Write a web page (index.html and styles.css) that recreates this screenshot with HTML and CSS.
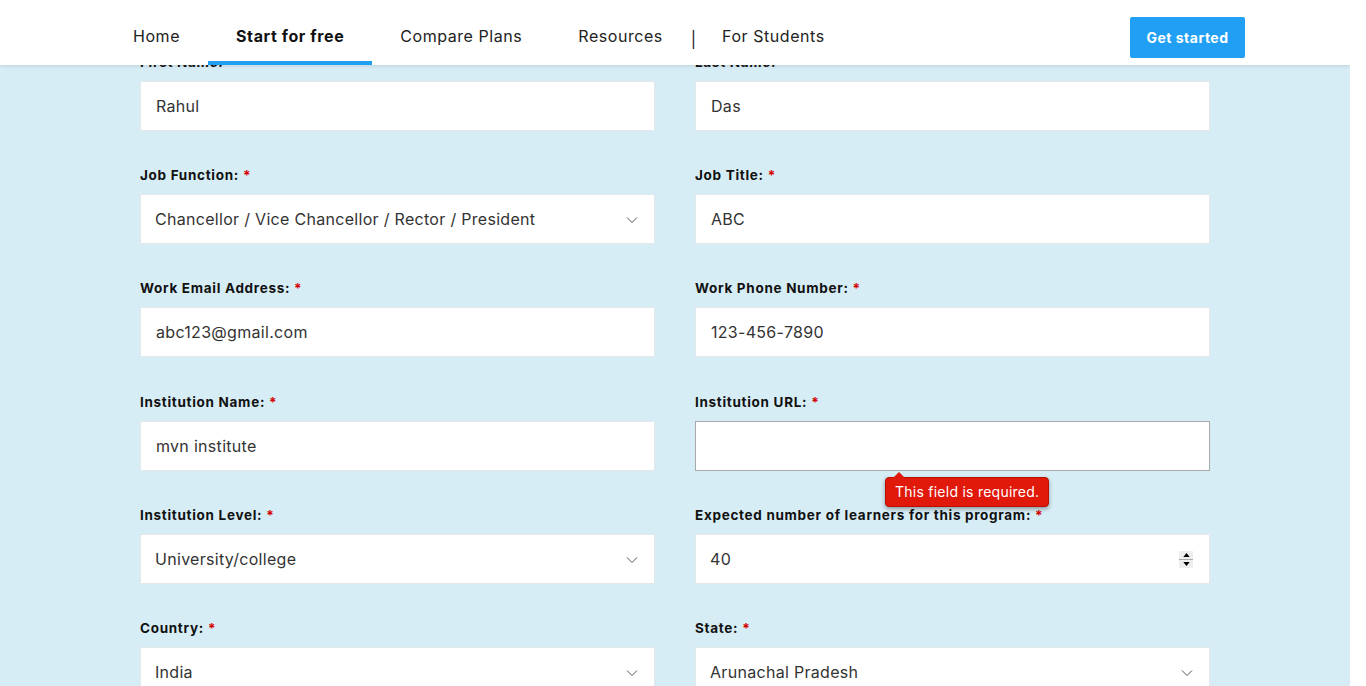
FILE: index.html
```html
<!DOCTYPE html>
<html lang="en">
<head>
<meta charset="utf-8">
<title>Start for free</title>
<link rel="stylesheet" href="styles.css">
</head>
<body>
<div class="page">
  <header class="topbar">
    <nav class="nav">
      <a class="nav-item">Home</a>
      <a class="nav-item active">Start for free</a>
      <a class="nav-item">Compare Plans</a>
      <a class="nav-item">Resources</a>
      <span class="nav-sep">|</span>
      <a class="nav-item">For Students</a>
    </nav>
    <a class="btn-start">Get started</a>
  </header>

  <form class="form">
    <div class="field">
      <label class="lbl">First Name:</label>
      <div class="input">Rahul</div>
    </div>
    <div class="field">
      <label class="lbl">Last Name:</label>
      <div class="input">Das</div>
    </div>

    <div class="field">
      <label class="lbl">Job Function: <span class="req">*</span></label>
      <div class="input select">Chancellor / Vice Chancellor / Rector / President
        <svg class="chev" viewBox="0 0 12 8" width="12" height="8"><path d="M1 1.5 L6 6.5 L11 1.5" fill="none" stroke="#555" stroke-width="1"/></svg>
      </div>
    </div>
    <div class="field">
      <label class="lbl">Job Title: <span class="req">*</span></label>
      <div class="input">ABC</div>
    </div>

    <div class="field">
      <label class="lbl">Work Email Address: <span class="req">*</span></label>
      <div class="input">abc123@gmail.com</div>
    </div>
    <div class="field">
      <label class="lbl">Work Phone Number: <span class="req">*</span></label>
      <div class="input">123-456-7890</div>
    </div>

    <div class="field">
      <label class="lbl">Institution Name: <span class="req">*</span></label>
      <div class="input">mvn institute</div>
    </div>
    <div class="field">
      <label class="lbl">Institution URL: <span class="req">*</span></label>
      <div class="input invalid"></div>
      <div class="tip">This field is required.</div>
    </div>

    <div class="field">
      <label class="lbl">Institution Level: <span class="req">*</span></label>
      <div class="input select">University/college
        <svg class="chev" viewBox="0 0 12 8" width="12" height="8"><path d="M1 1.5 L6 6.5 L11 1.5" fill="none" stroke="#555" stroke-width="1"/></svg>
      </div>
    </div>
    <div class="field">
      <label class="lbl">Expected number of learners for this program: <span class="req">*</span></label>
      <div class="input select">40
        <span class="spin"><span class="spin-btn"><svg viewBox="0 0 8 5" width="7" height="4"><path d="M0 5 L4 0 L8 5Z" fill="#000"/></svg></span><span class="spin-btn"><svg viewBox="0 0 8 5" width="7" height="4"><path d="M0 0 L4 5 L8 0Z" fill="#000"/></svg></span></span>
      </div>
    </div>

    <div class="field">
      <label class="lbl">Country: <span class="req">*</span></label>
      <div class="input select">India
        <svg class="chev" viewBox="0 0 12 8" width="12" height="8"><path d="M1 1.5 L6 6.5 L11 1.5" fill="none" stroke="#555" stroke-width="1"/></svg>
      </div>
    </div>
    <div class="field">
      <label class="lbl">State: <span class="req">*</span></label>
      <div class="input select">Arunachal Pradesh
        <svg class="chev" viewBox="0 0 12 8" width="12" height="8"><path d="M1 1.5 L6 6.5 L11 1.5" fill="none" stroke="#555" stroke-width="1"/></svg>
      </div>
    </div>
  </form>
</div>
<div class="scroll-strip"></div>
</body>
</html>
```

FILE: styles.css
```css
html, body {
  margin: 0;
  padding: 0;
  height: 686px;
  overflow: hidden;
  background: #fff;
  font-family: "Inter", "Open Sans", sans-serif;
}

.page {
  width: 1350px;
  height: 686px;
  background: #d7edf5;
  position: relative;
  overflow: hidden;
}

.topbar {
  position: absolute;
  top: 0;
  left: 0;
  right: 0;
  height: 65px;
  background: #fff;
  box-shadow: 0 1px 4px rgba(0, 0, 0, 0.12);
  display: flex;
  align-items: flex-start;
  justify-content: space-between;
  padding: 0 105px;
  z-index: 5;
}

.nav {
  display: flex;
  align-items: stretch;
  height: 65px;
}

.nav-item {
  display: flex;
  align-items: center;
  box-sizing: border-box;
  height: 65px;
  padding: 10px 28px 0;
  border-bottom: 4px solid transparent;
  font-size: 16px;
  letter-spacing: 0.55px;
  color: #222;
}

.nav-item.active {
  font-weight: 700;
  letter-spacing: 0.6px;
  color: #111;
  border-bottom-color: #209ef0;
}

.nav-sep {
  display: flex;
  align-items: center;
  box-sizing: border-box;
  height: 65px;
  padding-top: 12px;
  font-size: 16px;
  color: #222;
  margin-right: -2px;
}

.btn-start {
  display: flex;
  align-items: center;
  justify-content: center;
  width: 115px;
  height: 41px;
  margin-top: 17px;
  background: #209ff5;
  color: #fff;
  font-weight: 700;
  font-size: 14px;
  letter-spacing: 0.5px;
  border-radius: 2px;
}

.form {
  display: grid;
  grid-template-columns: 515px 515px;
  column-gap: 40px;
  row-gap: 34.2px;
  width: 1070px;
  margin: 0 auto;
  padding-top: 52px;
}

.field {
  position: relative;
  display: flex;
  flex-direction: column;
}

.lbl {
  font-size: 13.5px;
  font-weight: 700;
  line-height: 20px;
  letter-spacing: 0.7px;
  color: #111;
  margin-bottom: 9px;
}

.req {
  color: #d40000;
}

.input {
  box-sizing: border-box;
  height: 50px;
  background: #fff;
  border: 1px solid #e4e8ea;
  display: flex;
  align-items: center;
  padding: 0 15px;
  font-size: 16px;
  letter-spacing: 0.3px;
  color: #333;
  position: relative;
}

.input.select {
  padding-left: 14px;
}

.input.invalid {
  border: 1px solid #a9a9a9;
}

.chev {
  position: absolute;
  right: 16px;
  top: 21px;
}

.spin {
  position: absolute;
  right: 16px;
  top: 16px;
  display: flex;
  flex-direction: column;
  width: 14px;
  height: 17px;
  background: #aaa;
  gap: 1px;
}

.spin-btn {
  flex: 1;
  background: #eee;
  display: flex;
  align-items: center;
  justify-content: center;
}

.tip {
  position: absolute;
  left: 190px;
  top: 85px;
  background: #e0190b;
  color: #fff;
  font-size: 14px;
  letter-spacing: 0.25px;
  padding: 0 9px;
  height: 30px;
  display: flex;
  align-items: center;
  border-radius: 4px;
  box-shadow: 0 2px 4px rgba(0, 0, 0, 0.35);
  border: 1px solid #b80f05;
  box-sizing: border-box;
  white-space: nowrap;
  z-index: 3;
}

.tip::before {
  content: "";
  position: absolute;
  left: 7px;
  top: -6px;
  border-left: 6px solid transparent;
  border-right: 6px solid transparent;
  border-bottom: 6px solid #e0190b;
}

.scroll-strip {
  position: absolute;
  top: 0;
  left: 1350px;
  width: 16px;
  height: 686px;
  background: #fff;
}
```
